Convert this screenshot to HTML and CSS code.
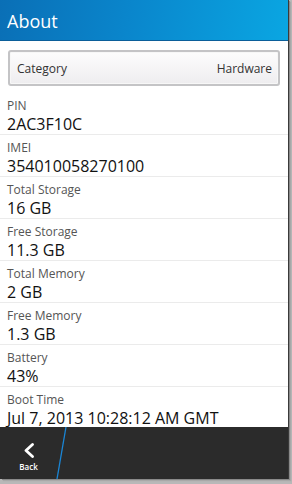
FILE: index.html
```html
<!DOCTYPE html>
<html>
<head>
<meta charset="utf-8">
<link rel="stylesheet" href="styles.css">
</head>
<body>
<div class="screen">
  <header class="titlebar"><h1>About</h1></header>
  <div class="content">
    <div class="dropdown">
      <span>Category</span>
      <span>Hardware</span>
    </div>
    <ul class="list">
      <li><span class="label">PIN</span><span class="value">2AC3F10C</span></li>
      <li><span class="label">IMEI</span><span class="value">354010058270100</span></li>
      <li><span class="label">Total Storage</span><span class="value">16 GB</span></li>
      <li><span class="label">Free Storage</span><span class="value">11.3 GB</span></li>
      <li><span class="label">Total Memory</span><span class="value">2 GB</span></li>
      <li><span class="label">Free Memory</span><span class="value">1.3 GB</span></li>
      <li><span class="label">Battery</span><span class="value">43%</span></li>
      <li><span class="label">Boot Time</span><span class="value">Jul 7, 2013 10:28:12 AM GMT</span></li>
    </ul>
  </div>
  <footer class="actionbar">
    <div class="back">
      <svg width="12" height="15" viewBox="0 0 12 15"><path d="M9.5 1.5 L3 7.5 L9.5 13.5" fill="none" stroke="#fff" stroke-width="2.8" stroke-linecap="round" stroke-linejoin="round"/></svg>
      <span>Back</span>
    </div>
    <svg class="slash" width="14" height="52" viewBox="0 0 14 52"><line x1="11" y1="0" x2="2" y2="52" stroke="#1a86d6" stroke-width="1.3"/></svg>
  </footer>
</div>
</body>
</html>
```
FILE: styles.css
```css
* { box-sizing: border-box; margin: 0; padding: 0; }
html, body { width: 292px; height: 484px; overflow: hidden; }
body {
  background: #b8b8b8;
  font-family: "Open Sans", "Noto Sans", sans-serif;
}
.screen {
  width: 288px;
  height: 479px;
  background: #fff;
  display: flex;
  flex-direction: column;
  box-shadow: 1px 0 0 #3a3a3a, 2px 1px 0 #8a8a8a, 3px 2px 1px #a8a8a8;
  overflow: hidden;
}
.titlebar {
  height: 41px;
  flex: none;
  background: linear-gradient(100deg, #0a6fb6 0%, #0a86cc 45%, #0aa6e2 100%);
  border-bottom: 1px solid #0b5f9a;
  display: flex;
  align-items: center;
  padding-left: 7px;
}
.titlebar h1 {
  color: #fff;
  font-size: 18px;
  font-weight: 500;
  padding-top: 1px;
}
.content {
  flex: 1;
  min-height: 0;
  padding-top: 9px;
}
.dropdown {
  margin: 0 8px 0 8px;
  height: 36px;
  border: 2px solid #c4c4c6;
  border-radius: 3px;
  background: linear-gradient(#fdfdfd, #eeedef);
  box-shadow: inset 0 0 0 1px #f7f7f7;
  display: flex;
  justify-content: space-between;
  align-items: center;
  padding: 0 6px 0 7px;
  font-size: 12px;
  color: #333;
}
.list { list-style: none; margin-top: 7px; }
.list li {
  height: 42px;
  border-bottom: 1px solid #ebebeb;
  display: flex;
  flex-direction: column;
  padding: 5px 0 0 7px;
}
.label {
  font-size: 12px;
  line-height: 16px;
  color: #555;
}
.value {
  font-size: 16px;
  line-height: 20px;
  color: #111;
}
.actionbar {
  height: 52px;
  flex: none;
  position: relative;
  background: #2b2b2b;
  display: flex;
  align-items: stretch;
}
.back {
  width: 55px;
  display: flex;
  flex-direction: column;
  align-items: center;
  padding-top: 16px;
  padding-left: 2px;
  gap: 5px;
}
.back span {
  color: #fff;
  font-size: 8px;
  font-weight: 600;
  line-height: 8px;
}
.slash { flex: none; }
```
